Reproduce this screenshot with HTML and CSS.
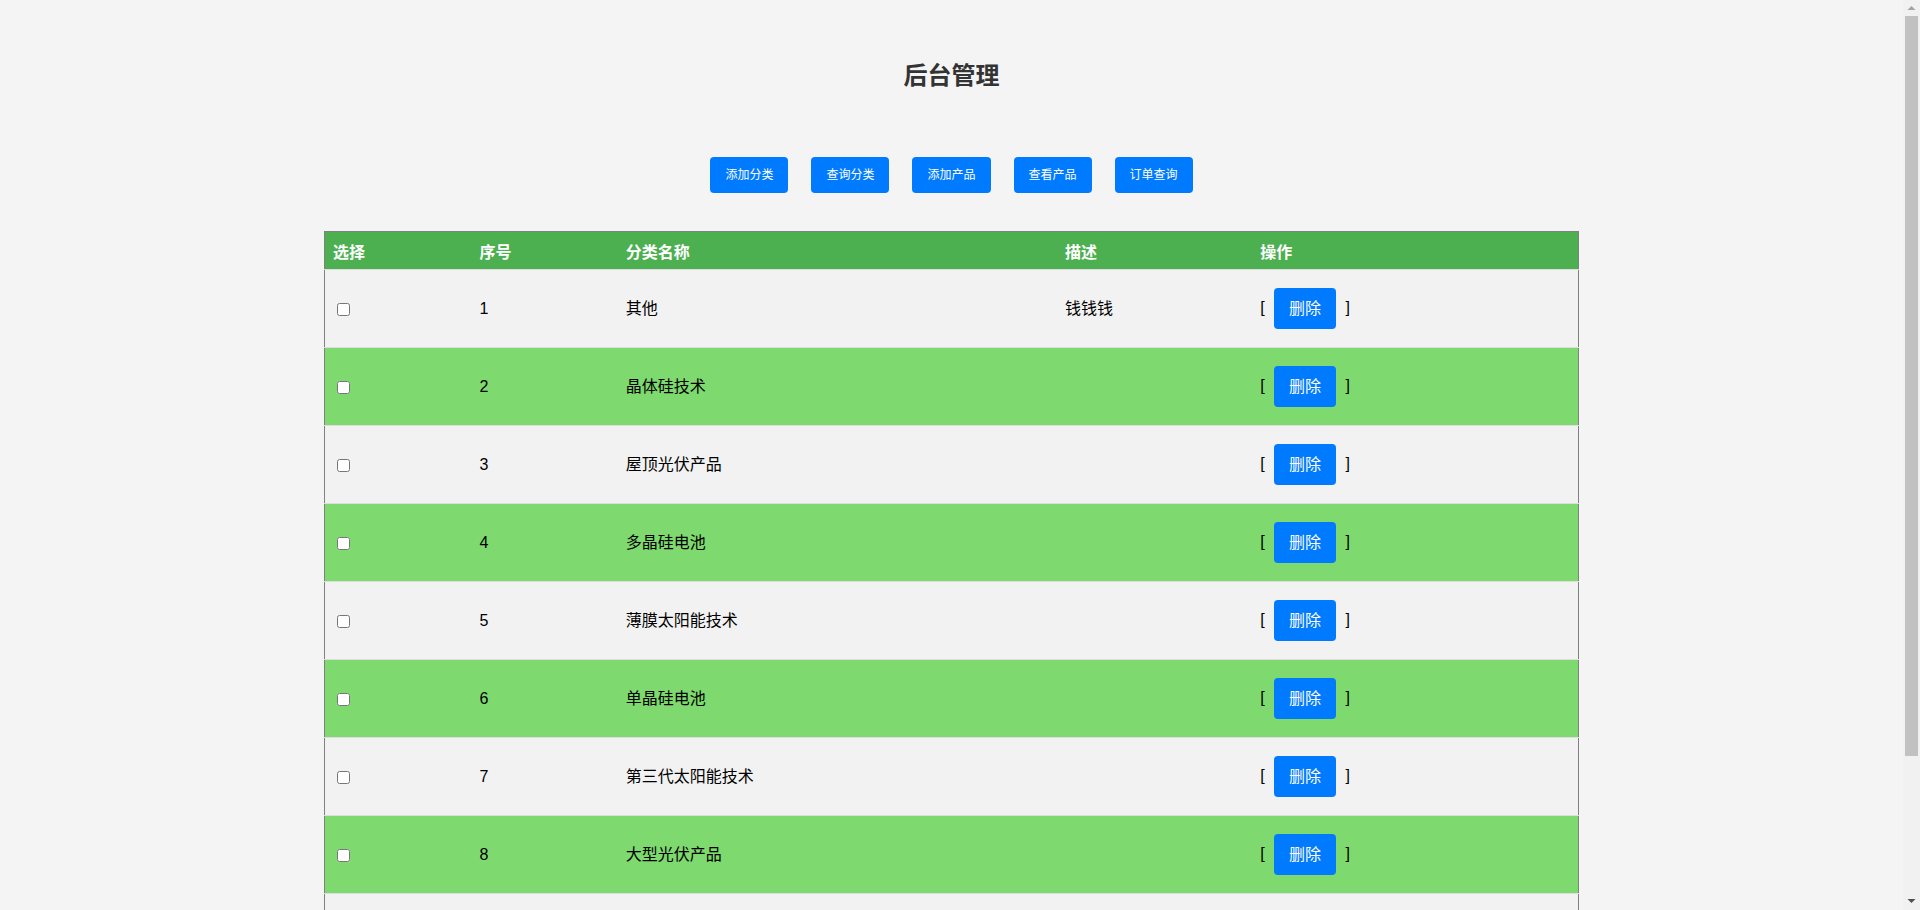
FILE: index.html
```html
<!DOCTYPE html>
<html lang="zh-CN">
<head>
<meta charset="utf-8">
<title>后台管理</title>
<link rel="stylesheet" href="styles.css">
</head>
<body>
<div class="shell">
<div class="page">
  <h2 class="title">后台管理</h2>
  <nav class="nav">
    <a class="nav-btn" href="#">添加分类</a>
    <a class="nav-btn" href="#">查询分类</a>
    <a class="nav-btn" href="#">添加产品</a>
    <a class="nav-btn" href="#">查看产品</a>
    <a class="nav-btn" href="#">订单查询</a>
  </nav>
  <table class="grid">
    <colgroup>
      <col class="c-sel"><col class="c-no"><col class="c-name"><col class="c-desc"><col class="c-op">
    </colgroup>
    <thead>
      <tr class="head-row"><th>选择</th><th>序号</th><th>分类名称</th><th>描述</th><th>操作</th></tr>
    </thead>
    <tbody>
      <tr class="row"><td><input type="checkbox"></td><td>1</td><td>其他</td><td>钱钱钱</td><td>[ <button class="del">删除</button> ]</td></tr>
      <tr class="row"><td><input type="checkbox"></td><td>2</td><td>晶体硅技术</td><td></td><td>[ <button class="del">删除</button> ]</td></tr>
      <tr class="row"><td><input type="checkbox"></td><td>3</td><td>屋顶光伏产品</td><td></td><td>[ <button class="del">删除</button> ]</td></tr>
      <tr class="row"><td><input type="checkbox"></td><td>4</td><td>多晶硅电池</td><td></td><td>[ <button class="del">删除</button> ]</td></tr>
      <tr class="row"><td><input type="checkbox"></td><td>5</td><td>薄膜太阳能技术</td><td></td><td>[ <button class="del">删除</button> ]</td></tr>
      <tr class="row"><td><input type="checkbox"></td><td>6</td><td>单晶硅电池</td><td></td><td>[ <button class="del">删除</button> ]</td></tr>
      <tr class="row"><td><input type="checkbox"></td><td>7</td><td>第三代太阳能技术</td><td></td><td>[ <button class="del">删除</button> ]</td></tr>
      <tr class="row"><td><input type="checkbox"></td><td>8</td><td>大型光伏产品</td><td></td><td>[ <button class="del">删除</button> ]</td></tr>
      <tr class="row"><td><input type="checkbox"></td><td>9</td><td>光伏逆变器</td><td></td><td>[ <button class="del">删除</button> ]</td></tr>
      <tr class="row"><td><input type="checkbox"></td><td>10</td><td>储能系统</td><td></td><td>[ <button class="del">删除</button> ]</td></tr>
    </tbody>
  </table>
</div>
<div class="scrollbar" aria-hidden="true">
  <div class="sb-arrow"><svg width="17" height="17" viewBox="0 0 17 17"><polygon points="4.5,10 8.5,6 12.5,10" fill="#a3a3a3"/></svg></div>
  <div class="sb-track"><div class="sb-thumb"></div></div>
  <div class="sb-arrow"><svg width="17" height="17" viewBox="0 0 17 17"><polygon points="4.5,6 12.5,6 8.5,10" fill="#505050"/></svg></div>
</div>
</div>
</body>
</html>
```

FILE: styles.css
```css
html, body {
  margin: 0;
  padding: 0;
  height: 100%;
  overflow: hidden;
}
body {
  background: #f4f4f4;
  font-family: "Liberation Sans", "Noto Sans CJK SC", sans-serif;
  font-size: 16px;
  color: #000;
}
.shell {
  display: flex;
  height: 100vh;
}
.page {
  flex: 1;
  min-width: 0;
  box-sizing: border-box;
  height: 100%;
  overflow: hidden;
  padding: 60px 0 30px;
}
.title {
  margin: 0;
  height: 32px;
  line-height: 32px;
  font-size: 24px;
  font-weight: bold;
  color: #333;
  text-align: center;
}
.nav {
  display: flex;
  justify-content: center;
  gap: 23px;
  margin-top: 65px;
}
.nav-btn {
  display: block;
  height: 36px;
  box-sizing: border-box;
  padding: 0 15px;
  line-height: 36px;
  font-size: 12px;
  color: #fff;
  background: #007bff;
  border-radius: 4px;
  text-decoration: none;
}
.grid {
  margin: 38px auto 0;
  width: 1255px;
  border-collapse: collapse;
  border: 1px solid #808080;
  table-layout: fixed;
}
.c-sel { width: 147px; }
.c-no { width: 146px; }
.c-name { width: 439px; }
.c-desc { width: 195px; }
.c-op { width: 326px; }
.head-row {
  background: #4caf50;
}
.head-row th {
  height: 37px;
  padding: 0 8px;
  text-align: left;
  color: #fff;
  font-weight: bold;
  font-size: 16px;
  border-bottom: 1px solid #ddd;
  vertical-align: middle;
}
.row td {
  height: 77px;
  padding: 0 8px;
  border-bottom: 1px solid #ddd;
  vertical-align: middle;
  line-height: 20px;
}
.row:nth-child(odd) {
  background: #f2f2f2;
}
.row:nth-child(even) {
  background: #7ed96e;
}
.row input[type="checkbox"] {
  margin: 3px 3px 3px 4px;
  vertical-align: middle;
}
.del {
  display: inline-block;
  vertical-align: middle;
  margin: 0 5px;
  height: 41px;
  padding: 0 15px;
  border: none;
  border-radius: 4px;
  background: #007bff;
  color: #fff;
  font-family: "Liberation Sans", "Noto Sans CJK SC", sans-serif;
  font-size: 16px;
  line-height: 41px;
}
.scrollbar {
  flex: 0 0 17px;
  display: flex;
  flex-direction: column;
  background: #f1f1f1;
}
.sb-arrow {
  height: 17px;
  flex: 0 0 17px;
}
.sb-arrow svg {
  display: block;
}
.sb-track {
  flex: 1;
  padding: 0 2px;
}
.sb-thumb {
  height: 740px;
  margin-top: -1px;
  background: #c1c1c1;
}
```
